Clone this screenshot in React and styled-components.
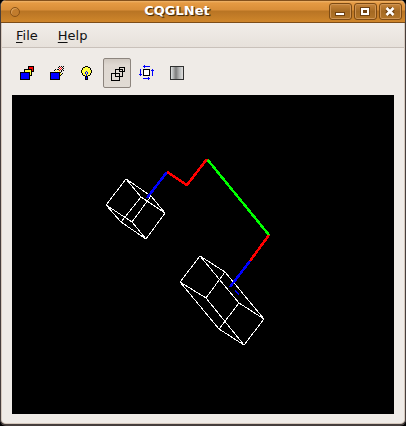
import React from "react";
import styled, { createGlobalStyle } from "styled-components";

const GlobalStyle = createGlobalStyle`
  * { box-sizing: border-box; }
  body { margin: 0; background: #000; font-family: "DejaVu Sans", sans-serif; }
`;

const Window = styled.div`
  display: flex;
  flex-direction: column;
  min-height: 100vh;
  border: solid #463e3c;
  border-width: 0 1px 2px 1px;
  border-radius: 6px;
  overflow: hidden;
  background: #efebe7;
  box-shadow: inset 1px 0 #d5c8bd, inset -1px 0 #d5c8bd, inset 0 -1px #d5c8bd;
`;

const TitleBar = styled.header`
  display: grid;
  grid-template-columns: 24px 1fr 76px;
  align-items: center;
  height: 23px;
  border-top: 1px solid #84511c;
  border-bottom: 1px solid #7c4d18;
  background: linear-gradient(#f0b56b 0, #e59a43 2px, #d98e38 9px, #b87424 10px, #cf862b 21px);
`;

const WindowMenu = styled.button`
  width: 10px;
  height: 10px;
  margin-left: 9px;
  padding: 0;
  border: 1px solid #8a5317;
  border-radius: 50%;
  background: #c17c2d;
  box-shadow: inset 1px 1px #dfa35c;
`;

const Title = styled.h1`
  margin: 0;
  text-align: center;
  font-size: 13px;
  line-height: 18px;
  padding-bottom: 2px;
  font-weight: bold;
  color: #fff;
  text-shadow: 1px 1px 1px #4b2c08, 1px 1px #5b380e;
`;

const WindowControls = styled.div`
  display: flex;
  justify-content: flex-end;
  gap: 2px;
  padding-right: 3px;
`;

const ControlButton = styled.button`
  display: block;
  width: 23px;
  height: 17px;
  padding: 0;
  border: 1px solid #7c4a13;
  border-radius: 3px;
  background: linear-gradient(#c8853a, #a56a23 50%, #b27528);
  box-shadow: inset 0 0 0 1px #cf9453;
`;

const Glyph = styled.svg`
  display: block;
  width: ${(p) => p.$w}px;
  height: ${(p) => p.$h}px;
`;

const MenuBar = styled.nav`
  display: flex;
  height: 25px;
  margin: 0 1px;
  padding-left: 8px;
  border-bottom: 1px solid #c9c1ba;
  background: linear-gradient(#f1ede9, #e7e1db);
`;

const MenuItem = styled.button`
  padding: 2px 6px 0;
  margin-right: 8px;
  border: 0;
  background: none;
  color: #111;
  font-family: "DejaVu Sans", sans-serif;
  font-size: 13px;
  line-height: 22px;
`;

const Accel = styled.span`
  text-decoration: underline;
  text-decoration-thickness: 1px;
  text-underline-offset: 2px;
`;

const ToolBar = styled.div`
  display: flex;
  gap: 2px;
  padding: 10px 12px 7px;
`;

const ToolButton = styled.button`
  display: flex;
  align-items: center;
  justify-content: center;
  width: 28px;
  height: 30px;
  padding: 0;
  border: 1px solid ${(p) => (p["aria-pressed"] ? "#8d857e" : "transparent")};
  border-radius: 2px;
  background: ${(p) => (p["aria-pressed"] ? "linear-gradient(#d0c8c0, #dfd8d1 6px, #e1dbd4)" : "none")};
`;

const Viewport = styled.main`
  flex: 1;
  display: flex;
  align-items: flex-start;
  margin: 0 11px 10px;
  background: #000;
`;

const Scene = styled.svg`
  display: block;
  width: 100%;
`;

const Y = "#ffff40";
const ramp = ["#d8d8d8", "#c0c4c4", "#b0b0b0", "#989898", "#858585", "#858585", "#989898", "#a8a8a8", "#b8b8b8", "#c0c4c4", "#d0d0d0", "#d8d8d8"];

const dots = (rows, x0, y0) =>
  rows.flatMap((row, y) =>
    [...row].map((c, x) =>
      c === "." ? null : (
        <rect key={`${x}-${y}`} x={x0 + x} y={y0 + y} width="1" height="1"
          fill={{ k: "#000", r: "#f00", y: Y, b: "#00f", w: "#fff" }[c]} />
      )
    )
  );

const tools = [
  {
    label: "Solid",
    art: (
      <g stroke="#000">
        <rect x="8.5" y=".5" width="5" height="5" fill="#f00" />
        <rect x="4.5" y="3.5" width="7" height="6" fill={Y} />
        <rect x=".5" y="6.5" width="9" height="7" fill="#00f" />
      </g>
    ),
  },
  {
    label: "Transparency",
    art: (
      <g>
        {dots([
          ".........k.k.k",
          "........k.r.k.",
          ".........r.r.k",
          ".....k.kk.r.k.",
          "....k.y.yr.k.k",
          ".....y.y.y.k..",
          "....y.y.y.k...",
          "..........y.k.",
          "..........yk..",
          "..........k...",
        ], 0, 0)}
        <rect x=".5" y="6.5" width="9" height="7" fill="#00f" stroke="#000" />
      </g>
    ),
  },
  {
    label: "Lighting",
    art: dots([
      "....kkk....",
      "..kkyyykk..",
      ".kyyyyyyyk.",
      ".kyyyyyyyk.",
      "kyyyyyyyyyk",
      "kyyyybyyyyk",
      "kyyybybyyyk",
      ".kyybybyyk.",
      ".kyyybyyyk.",
      "..kkybykk..",
      "....kkk....",
      "....kbk....",
      "....kbk....",
      "....kkk....",
    ], 1, 0),
  },
  {
    label: "Wireframe",
    pressed: true,
    art: (
      <g fill="none" stroke="#000">
        <rect x="9.5" y="1.5" width="5" height="4" />
        <rect x="5.5" y="3.5" width="7" height="7" />
        <rect x="1.5" y="7.5" width="8" height="7" />
      </g>
    ),
  },
  {
    label: "Orientation",
    art: (
      <g fill="none" stroke="#00f">
        <rect x="3.5" y="3.5" width="6" height="6" fill="#fff" stroke="#000" />
        <path d="M3 .5h7M4.5-1v3M3 12.5h7M8.5 11v3M.5 3v7M-1 8.5h3M12.5 3v7M11 4.5h3" />
      </g>
    ),
  },
  {
    label: "Shading",
    art: (
      <g>
        {ramp.map((c, i) => <rect key={i} x={i + 1} y="1" width="1" height="12" fill={c} />)}
        <rect x=".5" y=".5" width="13" height="13" fill="none" stroke="#303030" />
      </g>
    ),
  },
];

export default function App() {
  return (
    <>
      <GlobalStyle />
      <Window>
        <TitleBar>
          <WindowMenu aria-label="Window menu" />
          <Title>CQGLNet</Title>
          <WindowControls>
            <ControlButton aria-label="Minimize">
              <Glyph $w={20} $h={15} viewBox="0 0 20 15" shapeRendering="crispEdges">
                <rect x="5" y="8" width="10" height="4" fill="#704111" />
                <rect x="6" y="9" width="8" height="2" fill="#fff" />
              </Glyph>
            </ControlButton>
            <ControlButton aria-label="Maximize">
              <Glyph $w={20} $h={15} viewBox="0 0 20 15" shapeRendering="crispEdges">
                <rect x="5" y="3" width="10" height="9" fill="#704111" />
                <path d="M6 4h8v7H6zM8 6v3h4V6z" fill="#fff" fillRule="evenodd" />
              </Glyph>
            </ControlButton>
            <ControlButton aria-label="Close">
              <Glyph $w={20} $h={15} viewBox="0 0 20 15">
                <path d="M7 4.5l6 6M13 4.5l-6 6" stroke="#704111" strokeWidth="5" />
                <path d="M6.5 4l7 7M13.5 4l-7 7" stroke="#fff" strokeWidth="2.5" />
              </Glyph>
            </ControlButton>
          </WindowControls>
        </TitleBar>
        <MenuBar>
          <MenuItem><Accel>F</Accel>ile</MenuItem>
          <MenuItem><Accel>H</Accel>elp</MenuItem>
        </MenuBar>
        <ToolBar>
          {tools.map((t) => (
            <ToolButton key={t.label} aria-label={t.label} aria-pressed={!!t.pressed}>
              <Glyph $w={16} $h={16} viewBox="-1 -1 16 16" shapeRendering="crispEdges">{t.art}</Glyph>
            </ToolButton>
          ))}
        </ToolBar>
        <Viewport>
          <Scene viewBox="12 95 382 319" shapeRendering="crispEdges" fill="none" role="img" aria-label="Unfolded wireframe boxes">
            <g stroke="#fff">
              <path d="M126 179L106 205L121 222L146 239L165 213L151 196ZM126 179L141 197L165 213M141 197L121 222M106 205L132 222L146 239M132 222L151 196" />
              <path d="M200 256L180 282L219 329L244 345L264 319L225 272ZM200 256L239 303L264 319M239 303L219 329M180 282L206 298L244 345M206 298L225 272" />
            </g>
            <g strokeWidth="2.5">
              <path d="M147 198L167 172M230 287L250 261" stroke="#00f" />
              <path d="M235 291L239 294" stroke="#00f" strokeWidth="1.5" />
              <path d="M207 159L269 235" stroke="#0f0" />
              <path d="M167 172L187 185L207 159M250 261L269 235" stroke="#f00" />
            </g>
          </Scene>
        </Viewport>
      </Window>
    </>
  );
}
